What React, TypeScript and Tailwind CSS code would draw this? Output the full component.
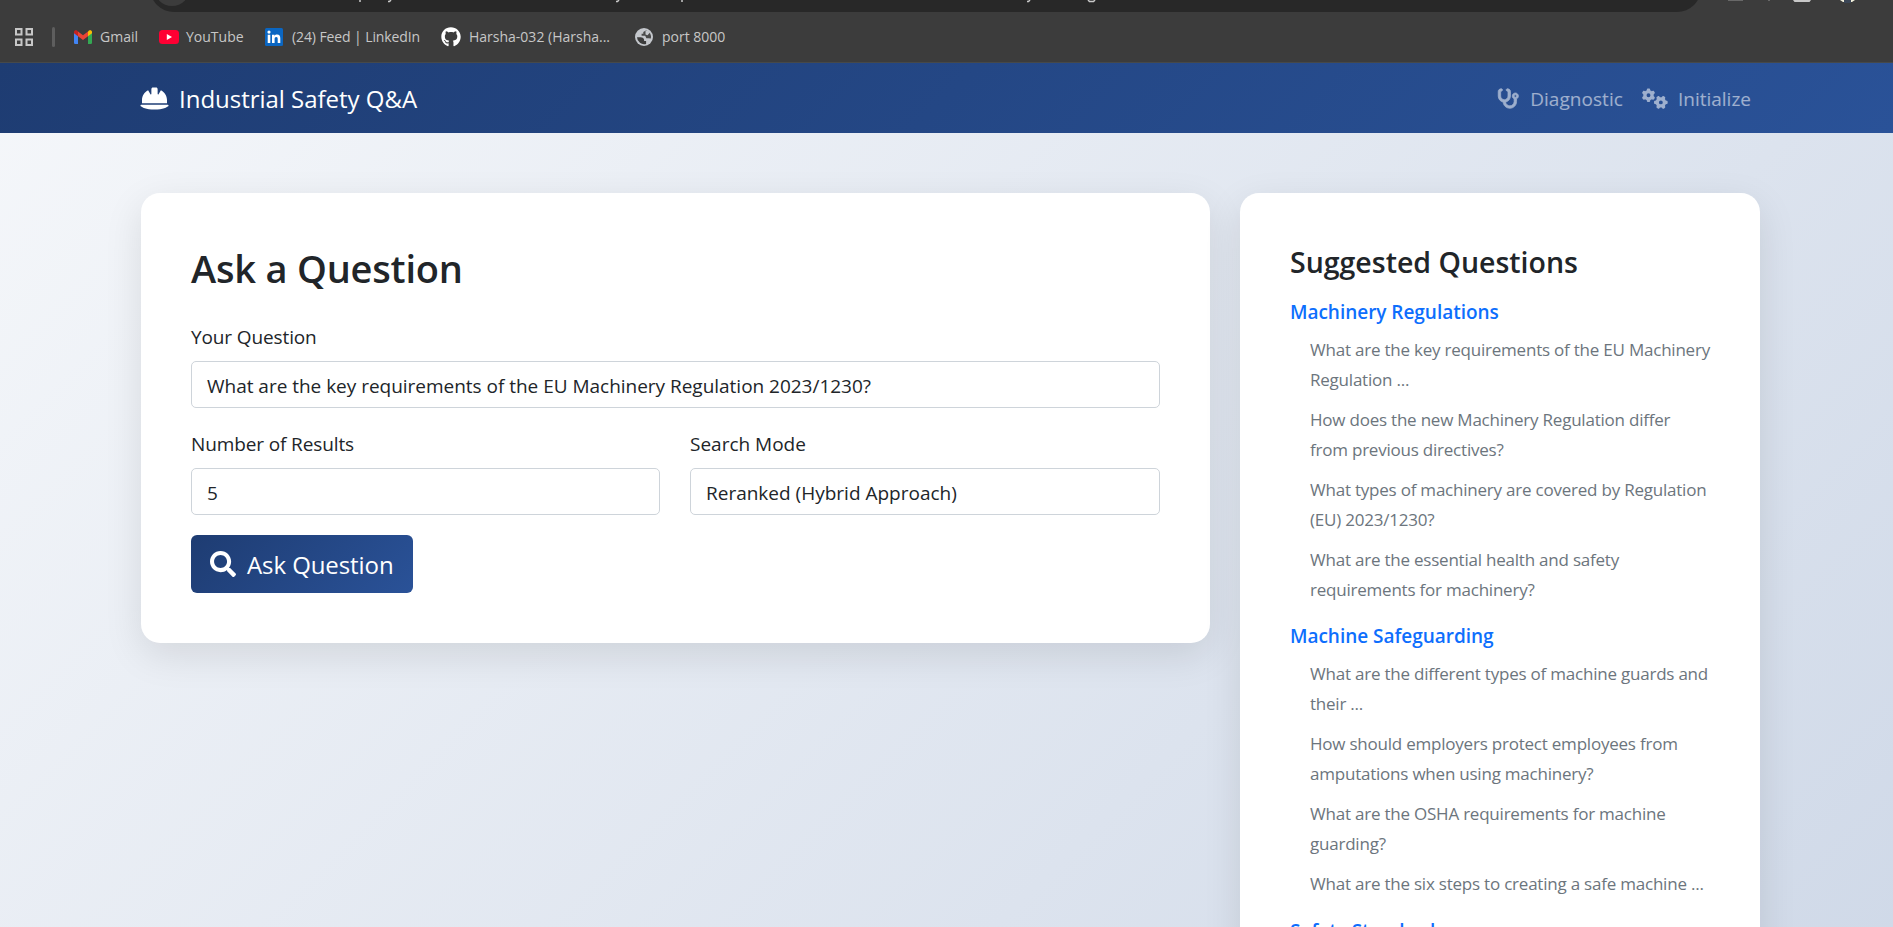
import React from "react";
import { FaGithub, FaSearch } from "react-icons/fa";
import { FaHelmetSafety, FaStethoscope, FaGears } from "react-icons/fa6";

const groups = [
  {
    title: "Machinery Regulations",
    items: [
      ["What are the key requirements of the EU Machinery", "Regulation ..."],
      ["How does the new Machinery Regulation differ", "from previous directives?"],
      ["What types of machinery are covered by Regulation", "(EU) 2023/1230?"],
      ["What are the essential health and safety", "requirements for machinery?"],
    ],
  },
  {
    title: "Machine Safeguarding",
    items: [
      ["What are the different types of machine guards and", "their ..."],
      ["How should employers protect employees from", "amputations when using machinery?"],
      ["What are the OSHA requirements for machine", "guarding?"],
      ["What are the six steps to creating a safe machine ..."],
    ],
  },
  { title: "Safety Standards", items: [] },
];

function GmailIcon() {
  return (
    <svg viewBox="0 0 18 14" className="h-[14px] w-[18px]">
      <path fill="#4285f4" d="M0 2.5 4 5.5V14H1.2A1.2 1.2 0 0 1 0 12.8z" />
      <path fill="#34a853" d="M18 2.5 14 5.5V14h2.8A1.2 1.2 0 0 0 18 12.8z" />
      <path fill="#ea4335" d="M4 1.5 9 5.3 14 1.5V6.3L9 10 4 6.3z" />
      <path fill="#fbbc04" d="M14 1.5 15 .6C16.2-.3 18 .4 18 2v1.3L14 6.3z" />
      <path fill="#c5221f" d="M4 1.5 3 .6C1.8-.3 0 .4 0 2v1.3L4 6.3z" />
    </svg>
  );
}

function GlobeIcon() {
  return (
    <svg viewBox="0 0 18 18" className="size-[18px]">
      <circle cx="9" cy="9" r="9" fill="#c4c7cc" />
      <path fill="#3c3c3c" d="M2 9.3h3.6c2 0 3.5 1.2 3.5 2.7v.9h2v3A7.1 7.1 0 0 1 2 9.3z" />
      <path fill="#3c3c3c" d="M11.2 2.3 8.3 3.9v1.9H6.6v1.9h3.6l1.2 2.6h2.1l2.4.3A7.1 7.1 0 0 0 11.2 2.3z" opacity=".9" />
      <path fill="#c4c7cc" d="M10.5 2.5h2.5l2 2-2.5 2.7-2-.6z" />
    </svg>
  );
}

function AddressBar() {
  return (
    <div className="flex h-3 items-start overflow-hidden pl-[150px]">
      <div className="-mt-9 flex h-12 w-[1551px] shrink-0 items-end rounded-[24px] bg-[#282828] pb-[6px] pl-1">
        <div className="size-9 shrink-0 rounded-full bg-[#3c3c3c]" />
        <svg viewBox="190 0 910 6" className="h-[6px] w-[910px] shrink-0" fill="none" stroke="#c9c9c9" strokeWidth="1.5">
          <path d="M360 0v2M682 0v2M388 1.5h1.5L391 0M616 1.5h1.5L619 0M1027 1.5h1.5L1030 0M1088 0l1.5 1.5h4L1095 0" />
        </svg>
      </div>
      <svg viewBox="1701 0 170 4" className="h-1 w-[170px] shrink-0">
        <path fill="#686868" d="M1728 0h15v1h-15zM1768 0h2v1h-2z" />
        <path fill="#c7c7c7" d="M1793 0h18l-1.5 2h-15z" />
        <path fill="#f3f1dc" d="M1840 0h15l-3 2h-9z" />
        <path fill="#3b4656" d="M1844 0h7v3h-7z" />
      </svg>
    </div>
  );
}

function Bookmarks() {
  return (
    <div className="flex h-[50px] items-center text-[14px] leading-5 text-[#c7c7c7]">
      <svg viewBox="0 0 18 18" className="ml-[15px] size-[18px] shrink-0" fill="none" stroke="#c7c7c7" strokeWidth="2">
        <path d="M1 1h5.5v5.5H1zM11.5 1H17v5.5h-5.5zM1 11.500h5.500V17H1zM11.5 11.5H17V17h-5.5z" />
      </svg>
      <div className="ml-[19px] h-5 w-[3px] rounded bg-[#5e5e5e]" />
      <div className="ml-[19px] flex w-[85px] items-center gap-2"><GmailIcon /><span>Gmail</span></div>
      <div className="flex w-[106px] items-center gap-[7px]">
        <svg viewBox="0 0 20 14" className="h-[14px] w-5"><rect width="20" height="14" rx="3.5" fill="#ff0033" /><path d="M7.8 4v6L13 7z" fill="#fff" /></svg>
        <span>YouTube</span>
      </div>
      <div className="flex w-[176px] items-center gap-[9px]">
        <svg viewBox="0 0 18 18" className="size-[18px]">
          <rect width="18" height="18" rx="1.5" fill="#0a66c2" />
          <path fill="#fff" d="M2.7 6.8h2.6V15H2.7zM7 6.8h2.5v1.1c.5-.8 1.4-1.3 2.6-1.3 2.4 0 3.2 1.5 3.2 3.9V15h-2.6v-4c0-1.2-.3-2.1-1.4-2.1-1.2 0-1.7.9-1.7 2.1v4H7z" />
          <circle cx="4" cy="4.1" r="1.6" fill="#fff" />
        </svg>
        <span className="tracking-[-0.1px] whitespace-nowrap">(24) Feed | LinkedIn</span>
      </div>
      <div className="flex w-[194px] items-center gap-2"><FaGithub className="size-5 text-white" /><span>Harsha-032 (Harsha...</span></div>
      <div className="flex items-center gap-[9px]"><GlobeIcon /><span>port 8000</span></div>
    </div>
  );
}

const field = "flex h-[47px] items-center rounded-[5px] border border-[#ced4da] bg-white px-[15px] pt-[3px]";
const label = "h-[30px] text-[19px] leading-[32px] tracking-[-0.12px]";

export default function App() {
  return (
    <div className="h-[927px] w-full overflow-hidden bg-[#3c3c3c] font-['Open_Sans',sans-serif] text-[#212529]">
      <AddressBar />
      <Bookmarks />
      <div className="h-[1826px] bg-[linear-gradient(135deg,#f5f7fa_0%,#c3cfe2_100%)]">
        <nav className="flex h-[71px] items-center justify-between border-t border-[#46494a] bg-[linear-gradient(135deg,#1e3c72_0%,#2a5298_100%)] pr-[142px] pl-[140px] text-white">
          <div className="flex items-center gap-[10px] text-[24px] tracking-[-0.02px]"><FaHelmetSafety className="h-[25px] w-[29px]" /><span className="pt-[2px]">Industrial Safety Q&amp;A</span></div>
          <div className="flex items-center gap-[19px] text-[19px] text-white/55">
            <div className="flex items-center gap-[11px]"><FaStethoscope className="h-[21px] w-[22px] text-white opacity-55 [stroke-width:20]" /><span className="pt-[2px] tracking-[0.05px]">Diagnostic</span></div>
            <div className="flex items-center gap-[10px]"><FaGears className="h-[21px] w-[26px]" /><span className="pt-[2px]">Initialize</span></div>
          </div>
        </nav>
        <main className="flex items-start gap-[30px] pt-[60px] pl-[141px]">
          <section className="h-[450px] w-[1069px] shrink-0 rounded-[19px] bg-white p-[50px] shadow-[0_12px_38px_rgba(0,0,0,0.1)]">
            <h2 className="h-12 text-[38px] leading-[50px] font-semibold tracking-[-0.2px]">Ask a Question</h2>
            <div className={`${label} mt-[30px]`}>Your Question</div>
            <div className={`${field} mt-[10px] text-[19px] tracking-[-0.02px]`}>What are the key requirements of the EU Machinery Regulation 2023/1230?</div>
            <div className="mt-5 grid grid-cols-[469px_470px] gap-[30px] text-[19px] leading-[30px]">
              <div><div className={label}>Number of Results</div><div className={`${field} mt-[10px]`}>5</div></div>
              <div><div className="h-[30px] leading-[32px]">Search Mode</div><div className={`${field} mt-[10px]`}>Reranked (Hybrid Approach)</div></div>
            </div>
            <button className="mt-5 flex h-[58px] w-[222px] items-center gap-[11px] rounded-[6px] bg-[linear-gradient(135deg,#1e3c72_0%,#2a5298_100%)] pl-[19px] text-[24px] tracking-[-0.08px] text-white"><FaSearch className="size-[26px]" /><span className="pt-[2px] whitespace-nowrap">Ask Question</span></button>
          </section>
          <section className="w-[520px] shrink-0 rounded-[19px] bg-white pt-[50px] pr-[50px] pb-[400px] pl-[50px] shadow-[0_12px_38px_rgba(0,0,0,0.1)]">
            <h4 className="mb-5 h-9 text-[28.5px] leading-[38px] font-semibold whitespace-nowrap">Suggested Questions</h4>
            {groups.map((g) => (
              <div key={g.title} className="mb-5 last:pt-px">
                <h6 className="h-6 text-[19px] leading-[27px] font-semibold tracking-[-0.03px] whitespace-nowrap text-[#0d6efd]">{g.title}</h6>
                <ul className="mt-[10px] flex flex-col gap-[10px] pl-5 text-[17px] leading-[33px] tracking-[-0.22px] text-[#6c757d]">
                  {g.items.map((lines) => (
                    <li key={lines[0]}>{lines.map((l) => <span key={l} className="block h-[30px] whitespace-nowrap">{l}</span>)}</li>
                  ))}
                </ul>
              </div>
            ))}
          </section>
        </main>
      </div>
    </div>
  );
}
